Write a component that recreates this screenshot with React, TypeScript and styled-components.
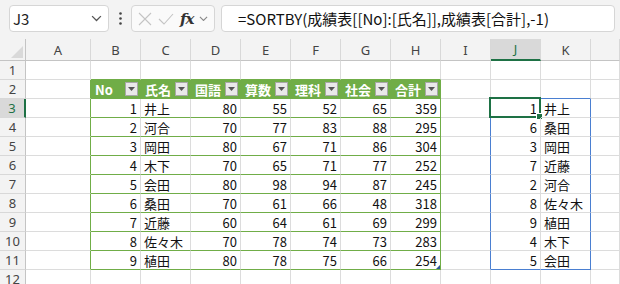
import React from "react";
import styled, { createGlobalStyle } from "styled-components";

const GRID = "#dcdcdc";
const HEAD_LINE = "#c4c4c4";
const GREEN = "#70ad47";
const BLUE = "#4a7fd1";
const SEL = "#1e7145";

const GlobalStyle = createGlobalStyle`
  html, body { margin: 0; padding: 0; background: #f3f3f3; }
  body {
    font-family: "Noto Sans CJK JP", "Noto Sans", sans-serif;
    overflow: hidden;
  }
`;

const Window = styled.div`
  width: 620px;
  height: 284px;
  overflow: hidden;
  display: flex;
  flex-direction: column;
  background: #fff;
`;

const FormulaBar = styled.div`
  height: 39px;
  flex: none;
  box-sizing: border-box;
  display: flex;
  align-items: flex-start;
  padding: 5px 5px 0 9px;
  background: #f3f3f3;
`;

const NameBox = styled.div`
  width: 100px;
  height: 27px;
  box-sizing: border-box;
  border: 1px solid #d6d6d6;
  border-radius: 4px;
  background: #fff;
  display: flex;
  align-items: center;
  justify-content: space-between;
  padding: 0 6px 0 3px;
  font-size: 15px;
  color: #222;
`;

const Grip = styled.div`
  width: 22px;
  height: 27px;
  display: flex;
  align-items: center;
  justify-content: center;
`;

const FuncBox = styled.div`
  width: 84px;
  height: 27px;
  box-sizing: border-box;
  border: 1px solid #d6d6d6;
  border-radius: 4px;
  background: #fafafa;
  display: flex;
  align-items: center;
  gap: 6px;
  padding: 0 4px 0 6px;
`;

const Fx = styled.span`
  font-family: "DejaVu Serif", "Liberation Serif", serif;
  font-style: italic;
  font-weight: bold;
  font-size: 15px;
  color: #333;
  letter-spacing: -1px;
`;

const FormulaInput = styled.div`
  margin-left: 6px;
  flex: 1;
  height: 27px;
  box-sizing: border-box;
  border: 1px solid #d6d6d6;
  border-radius: 4px;
  background: #fff;
  display: flex;
  align-items: center;
  padding-left: 16px;
  font-size: 15px;
  color: #111;
  white-space: nowrap;
`;

const Sheet = styled.div`
  display: grid;
  grid-template-columns: 26px 65px repeat(10, 50px) 1fr;
  grid-template-rows: 22px repeat(12, 19px);
  font-size: 13px;
  color: #111;
`;

const Corner = styled.div`
  background: #f3f3f3;
  border-right: 1px solid ${HEAD_LINE};
  border-bottom: 1px solid ${HEAD_LINE};
  display: flex;
  align-items: flex-end;
  justify-content: flex-end;
  padding: 0 2px 2px 0;
  box-sizing: border-box;
`;

const ColHead = styled.div<{ $active?: boolean }>`
  box-sizing: border-box;
  background: ${(p) => (p.$active ? "#d9d9d9" : "#f3f3f3")};
  border-right: 1px solid #d8d8d8;
  border-bottom: ${(p) => (p.$active ? `2px solid ${SEL}` : `1px solid ${HEAD_LINE}`)};
  display: flex;
  align-items: center;
  justify-content: center;
  font-family: "Noto Sans", sans-serif;
  font-size: 13px;
  color: ${(p) => (p.$active ? SEL : "#444")};
`;

const RowHead = styled.div<{ $active?: boolean }>`
  box-sizing: border-box;
  background: ${(p) => (p.$active ? "#d9d9d9" : "#f3f3f3")};
  border-right: ${(p) => (p.$active ? `2px solid ${SEL}` : `1px solid ${HEAD_LINE}`)};
  border-bottom: 1px solid #d8d8d8;
  display: flex;
  align-items: center;
  justify-content: center;
  font-family: "Noto Sans", sans-serif;
  font-size: 13px;
  color: ${(p) => (p.$active ? SEL : "#444")};
`;

const Cell = styled.div<{ $right?: boolean; $rb: string; $bb: string }>`
  position: relative;
  box-sizing: border-box;
  border-right: 1px solid ${(p) => p.$rb};
  border-bottom: 1px solid ${(p) => p.$bb};
  display: flex;
  align-items: center;
  justify-content: ${(p) => (p.$right ? "flex-end" : "flex-start")};
  padding: 0 3px 0 3px;
  white-space: nowrap;
  overflow: visible;
  line-height: 1;
`;

const TableHead = styled.div<{ $rb: string }>`
  box-sizing: border-box;
  background: ${GREEN};
  border-right: 1px solid ${(p) => p.$rb};
  border-bottom: 1px solid ${GREEN};
  display: flex;
  align-items: center;
  justify-content: space-between;
  padding: 0 2px 0 4px;
  color: #fff;
  font-weight: bold;
  white-space: nowrap;
`;

const FilterButton = styled.div`
  width: 13px;
  height: 14px;
  box-sizing: border-box;
  background: #e9e9e9;
  border: 1px solid #a8a8a8;
  display: flex;
  align-items: center;
  justify-content: center;
`;

const Selection = styled.div`
  position: absolute;
  left: -2px;
  top: -2px;
  right: -1px;
  bottom: -1px;
  border: 2px solid ${SEL};
  pointer-events: none;
`;

const FillHandle = styled.div`
  position: absolute;
  right: -4px;
  bottom: -4px;
  width: 5px;
  height: 5px;
  background: ${SEL};
  border: 1px solid #fff;
`;

const ResizeHandle = styled.div`
  position: absolute;
  right: 0;
  bottom: 0;
  width: 0;
  height: 0;
  border-left: 4px solid transparent;
  border-bottom: 4px solid #2f5597;
`;

const COLS = ["A", "B", "C", "D", "E", "F", "G", "H", "I", "J", "K", ""];

const HEADERS = ["No", "氏名", "国語", "算数", "理科", "社会", "合計"];

const SCORES: [number, string, number, number, number, number, number][] = [
  [1, "井上", 80, 55, 52, 65, 359],
  [2, "河合", 70, 77, 83, 88, 295],
  [3, "岡田", 80, 67, 71, 86, 304],
  [4, "木下", 70, 65, 71, 77, 252],
  [5, "会田", 80, 98, 94, 87, 245],
  [6, "桑田", 70, 61, 66, 48, 318],
  [7, "近藤", 60, 64, 61, 69, 299],
  [8, "佐々木", 70, 78, 74, 73, 283],
  [9, "植田", 80, 78, 75, 66, 254],
];

const SORTED: [number, string][] = [
  [1, "井上"],
  [6, "桑田"],
  [3, "岡田"],
  [7, "近藤"],
  [2, "河合"],
  [8, "佐々木"],
  [9, "植田"],
  [4, "木下"],
  [5, "会田"],
];

const Chevron = ({ size = 10, color = "#555" }: { size?: number; color?: string }) => (
  <svg width={size} height={size * 0.6} viewBox="0 0 10 6">
    <path d="M1 1 L5 5 L9 1" fill="none" stroke={color} strokeWidth="1.2" />
  </svg>
);

const Triangle = () => (
  <svg width="7" height="4" viewBox="0 0 7 4">
    <path d="M0 0 H7 L3.5 4 Z" fill="#555" />
  </svg>
);

// 行・列ごとの罫線色
const rightBorder = (r: number, c: number) => {
  if ((c === 0 || c === 7) && r >= 2 && r <= 11) return GREEN;
  if ((c === 8 || c === 10) && r >= 3 && r <= 11) return BLUE;
  return GRID;
};
const bottomBorder = (r: number, c: number) => {
  if (c >= 1 && c <= 7 && r >= 1 && r <= 11) return GREEN;
  if ((c === 9 || c === 10) && (r === 2 || r === 11)) return BLUE;
  return GRID;
};

const cellContent = (r: number, c: number): { text: string | number; right: boolean } => {
  if (r >= 3 && r <= 11 && c >= 1 && c <= 7) {
    const v = SCORES[r - 3][c - 1];
    return { text: v, right: c !== 2 };
  }
  if (r >= 3 && r <= 11 && (c === 9 || c === 10)) {
    const v = SORTED[r - 3][c - 9];
    return { text: v, right: c === 9 };
  }
  return { text: "", right: false };
};

export default function App() {
  const rows = Array.from({ length: 12 }, (_, i) => i + 1);

  return (
    <>
      <GlobalStyle />
      <Window>
        <FormulaBar>
          <NameBox>
            <span>J3</span>
            <Chevron size={11} />
          </NameBox>
          <Grip>
            <svg width="3" height="13" viewBox="0 0 3 13">
              <circle cx="1.5" cy="1.5" r="1.3" fill="#444" />
              <circle cx="1.5" cy="6.5" r="1.3" fill="#444" />
              <circle cx="1.5" cy="11.5" r="1.3" fill="#444" />
            </svg>
          </Grip>
          <FuncBox>
            <svg width="14" height="14" viewBox="0 0 14 14">
              <path d="M1 1 L13 13 M13 1 L1 13" stroke="#c4c4c4" strokeWidth="1.1" />
            </svg>
            <svg width="16" height="14" viewBox="0 0 16 14">
              <path d="M1 7 L6 12 L15 2" fill="none" stroke="#c4c4c4" strokeWidth="1.1" />
            </svg>
            <Fx>fx</Fx>
            <Chevron size={9} color="#888" />
          </FuncBox>
          <FormulaInput>=SORTBY(成績表[[No]:[氏名]],成績表[合計],-1)</FormulaInput>
        </FormulaBar>

        <Sheet>
          <Corner>
            <svg width="12" height="12" viewBox="0 0 12 12">
              <path d="M12 0 V12 H0 Z" fill="#d9d9d9" />
            </svg>
          </Corner>
          {COLS.map((name, i) => (
            <ColHead key={i} $active={name === "J"}>
              {name}
            </ColHead>
          ))}

          {rows.map((r) => (
            <React.Fragment key={r}>
              <RowHead $active={r === 3}>{r}</RowHead>
              {COLS.map((_, c) => {
                if (r === 2 && c >= 1 && c <= 7) {
                  return (
                    <TableHead key={c} $rb={c === 7 ? GREEN : GREEN}>
                      <span>{HEADERS[c - 1]}</span>
                      <FilterButton>
                        <Triangle />
                      </FilterButton>
                    </TableHead>
                  );
                }
                const { text, right } = cellContent(r, c);
                return (
                  <Cell key={c} $right={right} $rb={rightBorder(r, c)} $bb={bottomBorder(r, c)}>
                    {text}
                    {r === 3 && c === 9 && (
                      <Selection>
                        <FillHandle />
                      </Selection>
                    )}
                    {r === 11 && c === 7 && <ResizeHandle />}
                  </Cell>
                );
              })}
            </React.Fragment>
          ))}
        </Sheet>
      </Window>
    </>
  );
}
